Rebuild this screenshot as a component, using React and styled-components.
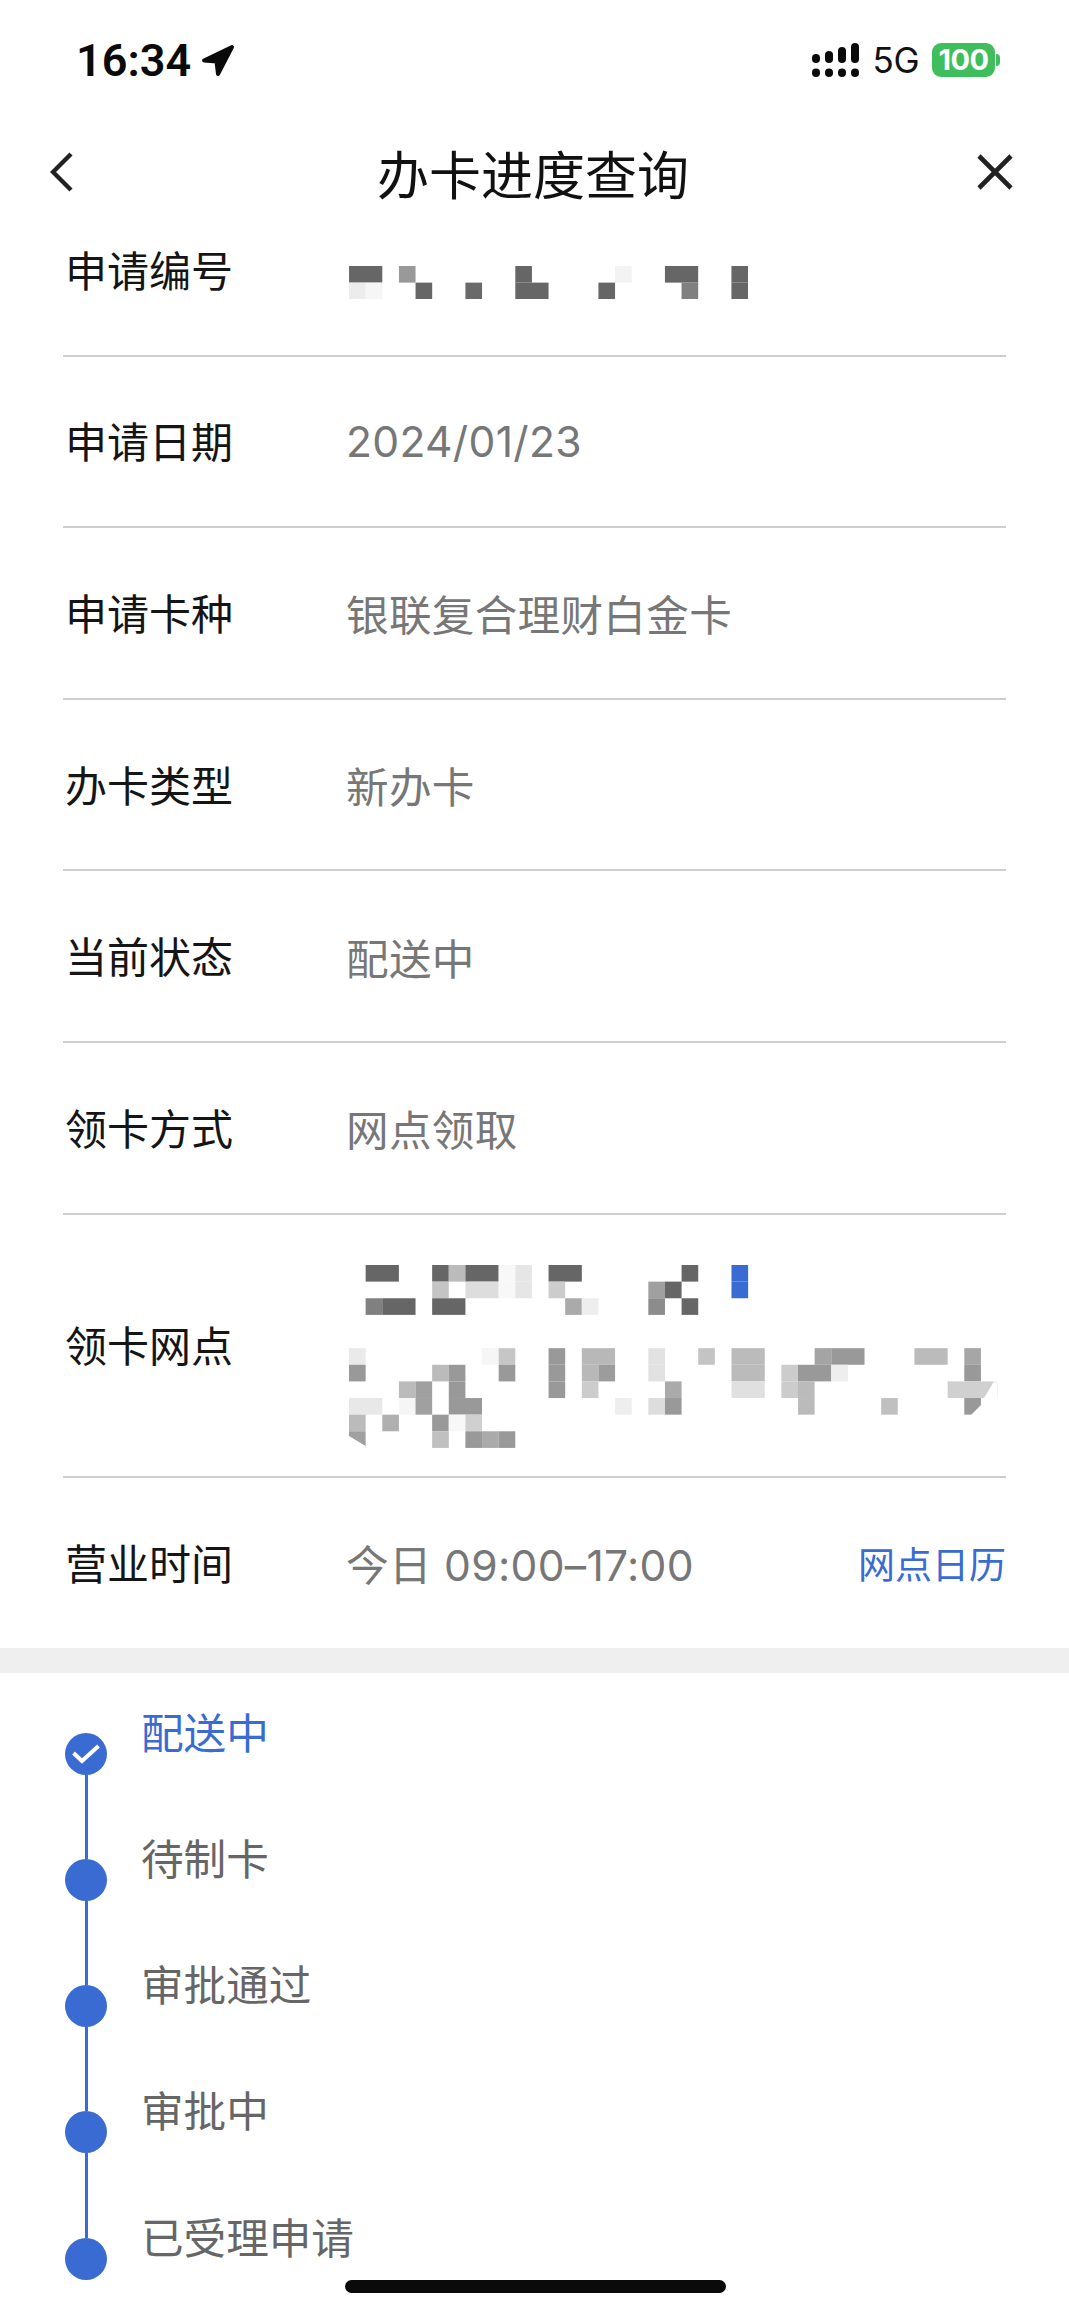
import styled, { createGlobalStyle } from 'styled-components';

const BLUE = '#3a6bd2';
const CELL = 16.63;

const GlobalStyle = createGlobalStyle`
  html, body {
    margin: 0;
    padding: 0;
    background: #fff;
  }
  * {
    box-sizing: border-box;
  }
`;

const Page = styled.div`
  position: relative;
  width: 1069px;
  height: 2313px;
  overflow: hidden;
  background: #fff;
  font-family: Inter, 'Noto Sans CJK SC', sans-serif;
`;

const StatusBar = styled.div`
  height: 120px;
  display: flex;
  align-items: center;
  justify-content: space-between;
  padding: 0 69px 0 76px;
`;

const StatusGroup = styled.div`
  display: flex;
  align-items: center;
`;

const Time = styled.span`
  font-family: Roboto, sans-serif;
  font-size: 45px;
  font-weight: 600;
  color: #0a0a0a;
  margin-right: 10px;
`;

const Network = styled.span`
  font-family: Inter, sans-serif;
  font-size: 35px;
  color: #111;
  margin: 0 13px 0 13px;
  letter-spacing: -0.5px;
`;

const Battery = styled.div`
  width: 63px;
  height: 34px;
  border-radius: 9px;
  background: #3fbe5e;
  color: #fff;
  font-family: Inter, sans-serif;
  font-size: 29px;
  font-weight: 700;
  line-height: 34px;
  text-align: center;
  letter-spacing: -0.5px;
`;

const BatteryNub = styled.div`
  width: 4px;
  height: 12px;
  margin-left: 1px;
  border-radius: 0 6px 6px 0;
  background: #3fbe5e;
`;

const Nav = styled.div`
  height: 104px;
  display: grid;
  grid-template-columns: 1fr auto 1fr;
  align-items: center;
  padding: 0 53px 0 50px;
`;

const NavClose = styled.svg`
  justify-self: end;
  margin-right: 3px;
`;

const NavTitle = styled.h1`
  margin: 0;
  font-size: 52px;
  font-weight: 400;
  color: #111;
`;

const InfoList = styled.div`
  margin: -39px 63px 0;
`;

const Row = styled.div`
  display: flex;
  align-items: center;
  height: ${p => p.$height || 171.6}px;
  border-bottom: ${p => (p.$last ? 'none' : '2px solid #cfcfcf')};
`;

const Label = styled.span`
  width: 283px;
  flex-shrink: 0;
  padding: 0 0 3px 2px;
  font-size: 42px;
  color: #151515;
`;

const Value = styled.span`
  flex: 1;
  font-size: 42.6px;
  letter-spacing: 0.3px;
  color: #777;
`;

const LinkText = styled.span`
  font-size: 37px;
  color: ${BLUE};
`;

const Mosaic = styled.svg`
  display: block;
  margin: ${p => p.$offset}px 0 0 3px;
`;

const Band = styled.div`
  height: 25px;
  background: #efefef;
`;

const Timeline = styled.div`
  padding: 31px 0 0 65px;
`;

const Step = styled.div`
  display: flex;
  height: 126.25px;
`;

const Rail = styled.div`
  width: 42px;
  display: flex;
  flex-direction: column;
  align-items: center;
`;

const RailLine = styled.div`
  width: 3px;
  height: ${p => p.$height}px;
  background: ${p => (p.$hidden ? 'transparent' : BLUE)};
`;

const Dot = styled.div`
  width: 42px;
  height: 42px;
  flex-shrink: 0;
  border-radius: 50%;
  background: ${BLUE};
  display: flex;
  align-items: center;
  justify-content: center;
`;

const StepLabel = styled.span`
  margin-left: 34px;
  font-size: 42.6px;
  line-height: 60px;
  color: ${p => (p.$active ? BLUE : '#666')};
`;

const HomeIndicator = styled.div`
  position: absolute;
  left: 345px;
  top: 2280px;
  width: 381px;
  height: 13px;
  border-radius: 7px;
  background: #0a0a0a;
`;

// [row, col, span, colour]
const NUMBER_CELLS = [
  [0, 0, 2, '#666'], [0, 3, 1, '#999'], [0, 10, 1, '#666'], [0, 16, 1, '#f3f3f3'],
  [0, 19, 2, '#666'], [0, 23, 1, '#666'],
  [1, 0, 1, '#ececec'], [1, 1, 1, '#f6f6f6'], [1, 4, 1, '#666'], [1, 7, 1, '#6a6a6a'],
  [1, 10, 2, '#666'], [1, 15, 1, '#666'], [1, 20, 1, '#808080'], [1, 23, 1, '#666'],
];

const BRANCH_CELLS = [
  [0, 1, 2, '#666'], [0, 5, 1, '#666'], [0, 6, 1, '#bbb'], [0, 7, 2, '#666'], [0, 9, 1, '#f8f8f8'],
  [0, 10, 1, '#e6e6e6'], [0, 12, 2, '#666'], [0, 20, 1, '#666'], [0, 23, 1, BLUE],
  [1, 5, 1, '#c4c4c4'], [1, 7, 2, '#ddd'], [1, 9, 1, '#f8f8f8'], [1, 10, 1, '#e6e6e6'],
  [1, 12, 1, '#ccc'], [1, 18, 1, '#a0a0a0'], [1, 19, 1, '#666'], [1, 23, 1, BLUE],
  [2, 1, 1, '#808080'], [2, 2, 2, '#666'], [2, 5, 2, '#666'], [2, 13, 1, '#aaa'], [2, 14, 1, '#eee'],
  [2, 18, 1, '#8c8c8c'], [2, 20, 1, '#666'],
  [5, 0, 1, '#eaeaea'], [5, 8, 1, '#f6f6f6'], [5, 9, 1, '#c6c6c6'], [5, 12, 1, '#999'], [5, 14, 2, '#b8b8b8'],
  [5, 18, 1, '#e2e2e2'], [5, 21, 1, '#c4c4c4'], [5, 23, 2, '#bbb'], [5, 28, 1, '#a4a4a4'], [5, 29, 2, '#999'],
  [5, 34, 2, '#bbb'], [5, 37, 1, '#a6a6a6'],
  [6, 0, 1, '#999'], [6, 5, 1, '#bbb'], [6, 6, 1, '#999'], [6, 9, 1, '#999'], [6, 12, 1, '#999'],
  [6, 14, 1, '#b8b8b8'], [6, 15, 1, '#9c9c9c'], [6, 18, 1, '#e2e2e2'], [6, 23, 2, '#bbb'], [6, 26, 1, '#ccc'],
  [6, 27, 2, '#999'], [6, 29, 1, '#eee'], [6, 37, 1, '#999'],
  [7, 3, 1, '#bbb'], [7, 4, 1, '#a0a0a0'], [7, 6, 1, '#999'], [7, 12, 1, '#999'], [7, 14, 1, '#ccc'],
  [7, 19, 1, '#aaa'], [7, 23, 2, '#e0e0e0'], [7, 26, 1, '#ccc'], [7, 27, 1, '#bbb'], [7, 36, 3, '#d0d0d0'],
  [8, 0, 2, '#e8e8e8'], [8, 3, 1, '#f6f6f6'], [8, 4, 1, '#a0a0a0'], [8, 6, 2, '#999'], [8, 16, 1, '#eee'],
  [8, 18, 1, '#ddd'], [8, 19, 1, '#999'], [8, 27, 1, '#bbb'], [8, 32, 1, '#c0c0c0'], [8, 37, 1, '#999'],
  [9, 0, 1, '#bbb'], [9, 2, 1, '#b0b0b0'], [9, 5, 1, '#999'], [9, 6, 1, '#f8f8f8'], [9, 7, 1, '#d0d0d0'],
  [10, 0, 1, '#a0a0a0'], [10, 5, 1, '#c0c0c0'], [10, 7, 1, '#999'], [10, 8, 1, '#aaa'], [10, 9, 1, '#999'],
];

const rows = [
  { label: '申请日期', value: '2024/01/23' },
  { label: '申请卡种', value: '银联复合理财白金卡' },
  { label: '办卡类型', value: '新办卡' },
  { label: '当前状态', value: '配送中' },
  { label: '领卡方式', value: '网点领取' },
];

const steps = ['配送中', '待制卡', '审批通过', '审批中', '已受理申请'];

function Pixelated({ cells, cols, rowCount, offset, children }) {
  return (
    <Mosaic
      $offset={offset}
      width={cols * CELL}
      height={rowCount * CELL}
      viewBox={`0 0 ${cols * CELL} ${rowCount * CELL}`}
    >
      {cells.map(([row, col, span, color]) => (
        <rect
          key={`${row}-${col}`}
          x={col * CELL}
          y={row * CELL}
          width={span * CELL}
          height={CELL}
          fill={color}
        />
      ))}
      {children}
    </Mosaic>
  );
}

function Signal() {
  const bars = [
    { x: 0, y: 11, h: 9 },
    { x: 13, y: 8, h: 12 },
    { x: 26, y: 4, h: 16 },
    { x: 39, y: 0, h: 20 },
  ];
  return (
    <svg width="48" height="34" viewBox="0 0 48 34">
      {bars.map(bar => (
        <g key={bar.x} fill="#0a0a0a">
          <rect x={bar.x} y={bar.y} width="8" height={bar.h} rx="4" />
          <rect x={bar.x} y="25.5" width="8" height="8.5" rx="4" />
        </g>
      ))}
    </svg>
  );
}

export default function App() {
  return (
    <Page>
      <GlobalStyle />
      <StatusBar>
        <StatusGroup>
          <Time>16:34</Time>
          <svg width="34" height="33" viewBox="0 0 34 33">
            <polygon
              points="31,3 3,16.5 15.5,17.5 17,30"
              fill="#0a0a0a"
              stroke="#0a0a0a"
              strokeWidth="4"
              strokeLinejoin="round"
            />
          </svg>
        </StatusGroup>
        <StatusGroup>
          <Signal />
          <Network>5G</Network>
          <Battery>100</Battery>
          <BatteryNub />
        </StatusGroup>
      </StatusBar>

      <Nav>
        <svg width="24" height="40" viewBox="0 0 24 40">
          <path d="M21 2 3 20l18 18" fill="none" stroke="#222" strokeWidth="4.4" />
        </svg>
        <NavTitle>办卡进度查询</NavTitle>
        <NavClose width="36" height="36" viewBox="0 0 36 36">
          <path d="M2 2l32 32M34 2 2 34" fill="none" stroke="#222" strokeWidth="4.6" />
        </NavClose>
      </Nav>

      <InfoList>
        <Row>
          <Label>申请编号</Label>
          <Pixelated cells={NUMBER_CELLS} cols={24} rowCount={2} offset={26} />
        </Row>
        {rows.map(row => (
          <Row key={row.label}>
            <Label>{row.label}</Label>
            <Value>{row.value}</Value>
          </Row>
        ))}
        <Row $height={263.5}>
          <Label>领卡网点</Label>
          <Pixelated cells={BRANCH_CELLS} cols={39} rowCount={11} offset={23}>
            <polygon points="645,116.4 648.6,116.4 648.6,133.1 635,133.1" fill="#fff" />
            <polygon points="632,140 632,150 622,150" fill="#fff" />
            <polygon points="0,171 16.6,181 16.6,183 0,183" fill="#fff" />
          </Pixelated>
        </Row>
        <Row $last $height={169.6}>
          <Label>营业时间</Label>
          <Value>今日 09:00–17:00</Value>
          <LinkText>网点日历</LinkText>
        </Row>
      </InfoList>

      <Band />

      <Timeline>
        {steps.map((step, i) => (
          <Step key={step}>
            <Rail>
              <RailLine $height={29} $hidden={i === 0} />
              <Dot>
                {i === 0 && (
                  <svg width="28" height="20" viewBox="0 0 28 20">
                    <path d="M1.5 9 10 17 26.5 2" fill="none" stroke="#fff" strokeWidth="4" />
                  </svg>
                )}
              </Dot>
              <RailLine $height={55.25} $hidden={i === steps.length - 1} />
            </Rail>
            <StepLabel $active={i === 0}>{step}</StepLabel>
          </Step>
        ))}
      </Timeline>

      <HomeIndicator />
    </Page>
  );
}
